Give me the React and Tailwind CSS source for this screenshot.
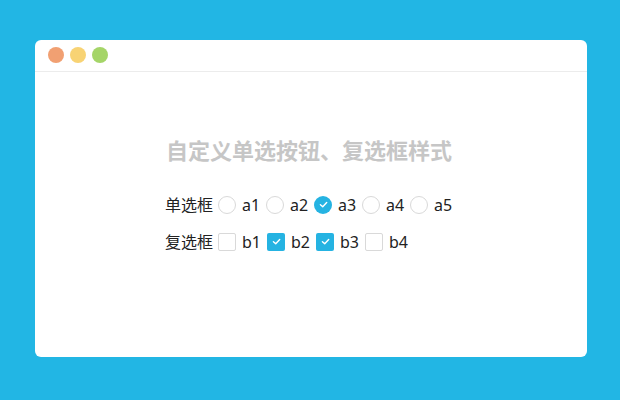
import React from "react";

const Check = () => (
  <svg width="11" height="11" viewBox="0 0 10 10" fill="none">
    <path d="M2.2 5.2 L4.3 7 L7.9 3.2" stroke="white" strokeWidth="1.3" strokeLinecap="round" strokeLinejoin="round" />
  </svg>
);

function Radio({ label, checked }) {
  return (
    <label className="flex items-center">
      <span
        className={
          checked
            ? "w-[18px] h-[18px] rounded-full bg-[#25b3e2] flex items-center justify-center"
            : "w-[18px] h-[18px] rounded-full border border-[#d9d9d9] bg-white"
        }
      >
        {checked && <Check />}
      </span>
      <span className="ml-[6px] mr-[6px] w-[18px]">{label}</span>
    </label>
  );
}

function Box({ label, checked }) {
  return (
    <label className="flex items-center">
      <span
        className={
          checked
            ? "w-[18px] h-[18px] rounded-[2px] bg-[#25b3e2] flex items-center justify-center"
            : "w-[18px] h-[18px] rounded-[2px] border border-[#d9d9d9] bg-white"
        }
      >
        {checked && <Check />}
      </span>
      <span className="ml-[6px] mr-[5px] w-[20px]">{label}</span>
    </label>
  );
}

export default function App() {
  return (
    <div
      className="w-[620px] h-[400px] bg-[#22b6e4] pt-[40px] pl-[35px]"
      style={{ fontFamily: '"Noto Sans", "Noto Sans CJK SC", sans-serif' }}
    >
      <div className="w-[552px] h-[317px] bg-white rounded-[6px] overflow-hidden">
        <div className="h-[32px] border-b border-[#ececec] flex items-center pl-[13px] gap-[6px] pb-[1px]">
          <span className="w-[16px] h-[16px] rounded-full bg-[#f1a072]" />
          <span className="w-[16px] h-[16px] rounded-full bg-[#f8d374]" />
          <span className="w-[16px] h-[16px] rounded-full bg-[#a5d568]" />
        </div>
        <div className="pl-[130px]">
          <h1 className="mt-[63px] h-[30px] leading-[30px] text-[22px] font-bold text-[#c6c6c6] pl-[1px]">
            自定义单选按钮、复选框样式
          </h1>
          <div className="mt-[21px] h-[37px] flex items-center text-[16px] text-[#222]">
            <span className="mr-[5px]">单选框</span>
            <Radio label="a1" />
            <Radio label="a2" />
            <Radio label="a3" checked />
            <Radio label="a4" />
            <Radio label="a5" />
          </div>
          <div className="h-[37px] flex items-center text-[16px] text-[#222]">
            <span className="mr-[5px]">复选框</span>
            <Box label="b1" />
            <Box label="b2" checked />
            <Box label="b3" checked />
            <Box label="b4" />
          </div>
        </div>
      </div>
    </div>
  );
}
